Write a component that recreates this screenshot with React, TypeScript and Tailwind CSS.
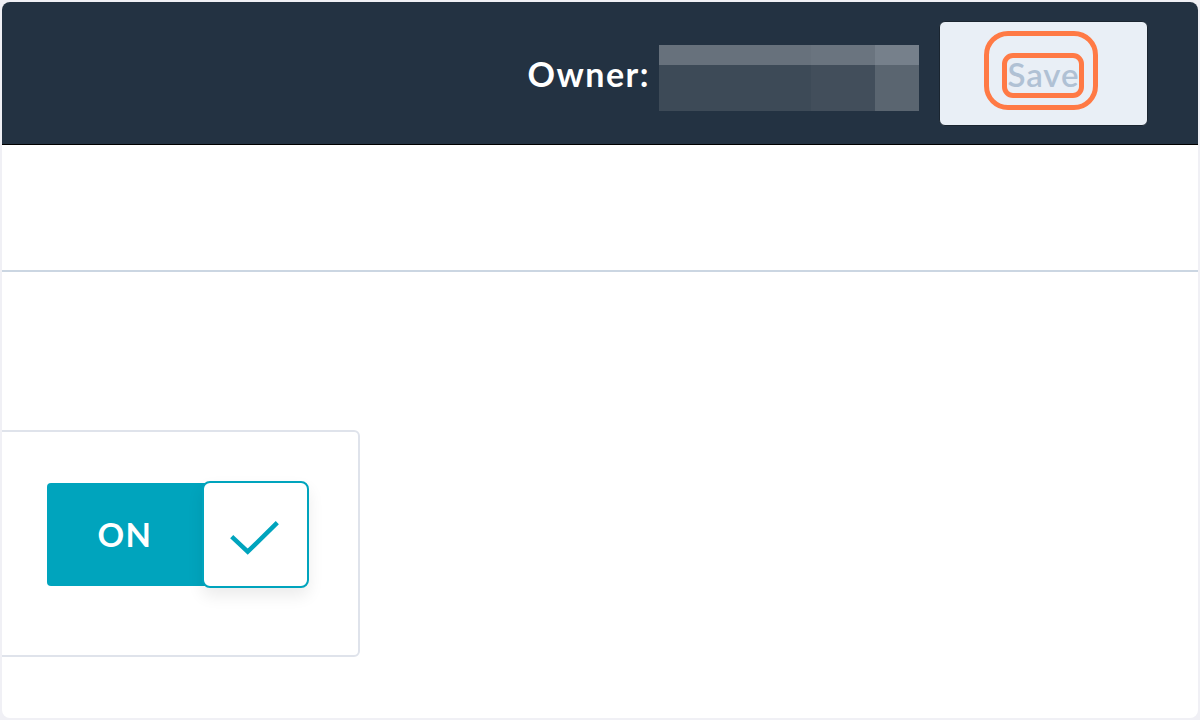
export default function App() {
  return (
    <div
      className="w-[1200px] h-[720px] bg-[#f0f0f5] p-[2px]"
      style={{ fontFamily: "Lato, 'Open Sans', sans-serif" }}
    >
      <div className="h-full rounded-lg overflow-hidden bg-white flex flex-col">
        {/* Header */}
        <div className="h-[143px] shrink-0 bg-[#233242] border-b border-black flex items-center justify-end pr-[50px]">
          <span className="text-white font-bold text-[34px] tracking-[1.5px] mr-[9px] mt-[1px]">
            Owner:
          </span>
          {/* blurred owner name */}
          <div className="mt-[10px] w-[260px] h-[66px] flex flex-col">
            <div className="h-[20px] flex">
              <div className="w-[152px] bg-[#67717c]" />
              <div className="w-[64px] bg-[#6a747f]" />
              <div className="flex-1 bg-[#76808b]" />
            </div>
            <div className="flex-1 flex">
              <div className="w-[152px] bg-[#3d4a57]" />
              <div className="w-[64px] bg-[#424e5b]" />
              <div className="flex-1 bg-[#5a6570]" />
            </div>
          </div>
          <div className="relative ml-[20px] w-[209px] h-[105px] rounded-md bg-[#e9eff6] border border-[#1a2530] flex items-center justify-center">
            <span className="text-[33px] text-[#b0c1d4] font-semibold tracking-[1px] mt-[4px]">Save</span>
            <div className="absolute left-[44px] top-[9px] w-[114px] h-[79px] rounded-[24px] border-[5px] border-[#ff7a45]" />
            <div className="absolute left-[62px] top-[31px] w-[82px] h-[45px] rounded-[11px] border-[5px] border-[#ff7a45]" />
          </div>
        </div>

        <div className="h-[125px] shrink-0" />
        <div className="h-[2px] shrink-0 bg-[#cbd6e2]" />

        {/* Body */}
        <div className="pt-[158px]">
          <div className="-ml-[20px] w-[378px] h-[227px] rounded-md border-2 border-[#dfe3eb] flex items-center pl-[63px] pb-[18px]">
            <div className="flex items-center">
              <div className="w-[163px] h-[103px] rounded-l bg-[#00a4bd] pr-[8px] flex items-center justify-center">
                <span className="text-white font-bold text-[33px] tracking-[1.5px] ml-[1px]">ON</span>
              </div>
              <div className="-ml-[8px] w-[107px] h-[107px] rounded-lg bg-white border-2 border-[#00a4bd] shadow-[0_8px_16px_rgba(0,0,0,0.08)]">
                <svg width="103" height="103" viewBox="0 0 103 103" fill="none">
                  <polyline
                    points="27.7,53.7 43.7,68.7 73.3,39.7"
                    stroke="#00a4bd"
                    strokeWidth="4.5"
                    strokeLinejoin="miter"
                  />
                </svg>
              </div>
            </div>
          </div>
        </div>
      </div>
    </div>
  );
}
